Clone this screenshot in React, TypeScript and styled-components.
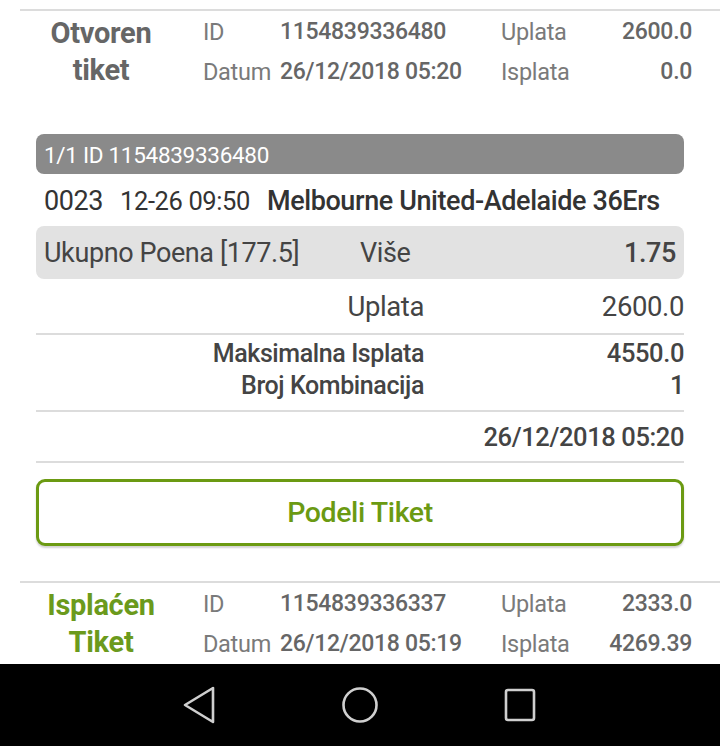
import React from "react";
import styled, { createGlobalStyle } from "styled-components";

const GlobalStyle = createGlobalStyle`
  html, body {
    margin: 0;
    padding: 0;
    background: #fff;
    font-family: Roboto, "Noto Sans", Arial, sans-serif;
    overflow: hidden;
  }
`;

const Page = styled.div`
  width: 720px;
  height: 746px;
  display: flex;
  flex-direction: column;
`;

const Content = styled.div`
  height: 664px;
  overflow: hidden;
  display: flex;
  flex-direction: column;
  padding-top: 9px;
  box-sizing: border-box;
`;

const TicketRow = styled.div`
  margin-left: 20px;
  border-top: 2px solid #dcdcdc;
  display: grid;
  grid-template-columns: 183px 77px 221px 100px 91px;
  padding-top: 1px;
`;

const Status = styled.div<{ $green?: boolean }>`
  grid-row: 1 / span 2;
  display: flex;
  flex-direction: column;
  align-items: center;
  justify-content: center;
  padding-right: 21px;
  font-size: 29px;
  font-weight: 700;
  line-height: 37px;
  letter-spacing: -0.3px;
  color: ${(p) => (p.$green ? "#6b9a1c" : "#666")};
`;

const Cell = styled.div<{ $kind: "label" | "value" | "amount" }>`
  height: 40px;
  line-height: 40px;
  font-size: ${(p) => (p.$kind === "label" ? 23.5 : 23)}px;
  white-space: nowrap;
  letter-spacing: -0.3px;
  color: ${(p) => (p.$kind === "label" ? "#7a7a7a" : "#666")};
  font-weight: ${(p) => (p.$kind === "label" ? 400 : 500)};
  text-align: ${(p) => (p.$kind === "amount" ? "right" : "left")};
`;

const Detail = styled.div`
  margin: 42px 36px 0;
  display: flex;
  flex-direction: column;
`;

const DetailHeader = styled.div`
  height: 40px;
  line-height: 42px;
  background: #8a8a8a;
  border-radius: 8px;
  color: #fff;
  font-size: 22.5px;
  padding-left: 8px;
  letter-spacing: -0.3px;
`;

const MatchRow = styled.div`
  height: 52px;
  padding-top: 2px;
  box-sizing: border-box;
  display: flex;
  align-items: center;
  gap: 17px;
  padding-left: 8px;
  color: #333;
  font-size: 27px;
  letter-spacing: -0.4px;
  white-space: nowrap;
`;

const MatchTime = styled.span`
  font-size: 25.5px;
`;

const MatchName = styled.span`
  font-weight: 500;
`;

const OddsRow = styled.div`
  height: 53px;
  background: #e2e2e2;
  border-radius: 8px;
  display: grid;
  grid-template-columns: 316px 1fr auto;
  align-items: center;
  padding: 0 8px;
  color: #444;
  font-size: 27px;
  letter-spacing: -0.4px;
`;

const Odd = styled.span`
  font-weight: 500;
`;

const SummaryBlock = styled.div<{ $rowHeight: number; $top?: number; $bottom?: number }>`
  display: grid;
  grid-template-columns: 388px 1fr;
  grid-auto-rows: ${(p) => p.$rowHeight}px;
  align-items: center;
  padding: ${(p) => p.$top ?? 0}px 0 ${(p) => p.$bottom ?? 0}px;
  border-bottom: 2px solid #dcdcdc;
  color: #444;
  letter-spacing: -0.4px;
  white-space: nowrap;
`;

const SumText = styled.div<{ $bold?: boolean; $size?: number }>`
  text-align: right;
  font-size: ${(p) => p.$size ?? 27.5}px;
  font-weight: ${(p) => (p.$bold ? 500 : 400)};
`;

const ShareButton = styled.button`
  margin-top: 16px;
  height: 67px;
  border: 3px solid #6b9a12;
  border-radius: 9px;
  background: #fff;
  color: #6b9a12;
  font-family: Roboto, "Noto Sans", Arial, sans-serif;
  font-size: 28.5px;
  font-weight: 500;
  letter-spacing: -0.4px;
  box-shadow: 0 2px 2px rgba(0, 0, 0, 0.18);
  padding: 0;
`;

const Spacer = styled.div`
  height: 36px;
`;

const NavBar = styled.div`
  height: 82px;
  background: #000;
  display: flex;
  align-items: center;
  justify-content: center;
  gap: 120px;
`;

const NavIcon = styled.svg`
  width: 40px;
  height: 40px;
  fill: none;
  stroke: #cfcfcf;
  stroke-width: 2.6;
  stroke-linejoin: round;
`;

type Ticket = {
  status: string[];
  green?: boolean;
  id: string;
  date: string;
  uplata: string;
  isplata: string;
};

const TicketSummary = ({ t }: { t: Ticket }) => (
  <TicketRow>
    <Status $green={t.green}>
      {t.status.map((s) => (
        <span key={s}>{s}</span>
      ))}
    </Status>
    <Cell $kind="label">ID</Cell>
    <Cell $kind="value">{t.id}</Cell>
    <Cell $kind="label">Uplata</Cell>
    <Cell $kind="amount">{t.uplata}</Cell>
    <Cell $kind="label">Datum</Cell>
    <Cell $kind="value">{t.date}</Cell>
    <Cell $kind="label">Isplata</Cell>
    <Cell $kind="amount">{t.isplata}</Cell>
  </TicketRow>
);

export default function App() {
  return (
    <Page>
      <GlobalStyle />
      <Content>
        <TicketSummary
          t={{
            status: ["Otvoren", "tiket"],
            id: "1154839336480",
            date: "26/12/2018 05:20",
            uplata: "2600.0",
            isplata: "0.0",
          }}
        />
        <Detail>
          <DetailHeader>1/1 ID 1154839336480</DetailHeader>
          <MatchRow>
            <span>0023</span>
            <MatchTime>12-26 09:50</MatchTime>
            <MatchName>Melbourne United-Adelaide 36Ers</MatchName>
          </MatchRow>
          <OddsRow>
            <span>Ukupno Poena [177.5]</span>
            <span>Više</span>
            <Odd>1.75</Odd>
          </OddsRow>
          <SummaryBlock $rowHeight={54}>
            <SumText>Uplata</SumText>
            <SumText>2600.0</SumText>
          </SummaryBlock>
          <SummaryBlock $rowHeight={32} $top={2} $bottom={9}>
            <SumText $bold $size={25}>
              Maksimalna Isplata
            </SumText>
            <SumText $bold $size={25.5}>
              4550.0
            </SumText>
            <SumText $bold $size={25}>
              Broj Kombinacija
            </SumText>
            <SumText $bold $size={25.5}>
              1
            </SumText>
          </SummaryBlock>
          <SummaryBlock $rowHeight={49}>
            <span />
            <SumText $bold $size={25.5}>
              26/12/2018 05:20
            </SumText>
          </SummaryBlock>
          <ShareButton>Podeli Tiket</ShareButton>
        </Detail>
        <Spacer />
        <TicketSummary
          t={{
            status: ["Isplaćen", "Tiket"],
            green: true,
            id: "1154839336337",
            date: "26/12/2018 05:19",
            uplata: "2333.0",
            isplata: "4269.39",
          }}
        />
      </Content>
      <NavBar>
        <NavIcon viewBox="0 0 40 40">
          <path d="M33 3 L33 37 L5 20 Z" />
        </NavIcon>
        <NavIcon viewBox="0 0 40 40">
          <circle cx="20" cy="20" r="16.5" />
        </NavIcon>
        <NavIcon viewBox="0 0 40 40">
          <rect x="6" y="5" width="28" height="30" rx="2" />
        </NavIcon>
      </NavBar>
    </Page>
  );
}
